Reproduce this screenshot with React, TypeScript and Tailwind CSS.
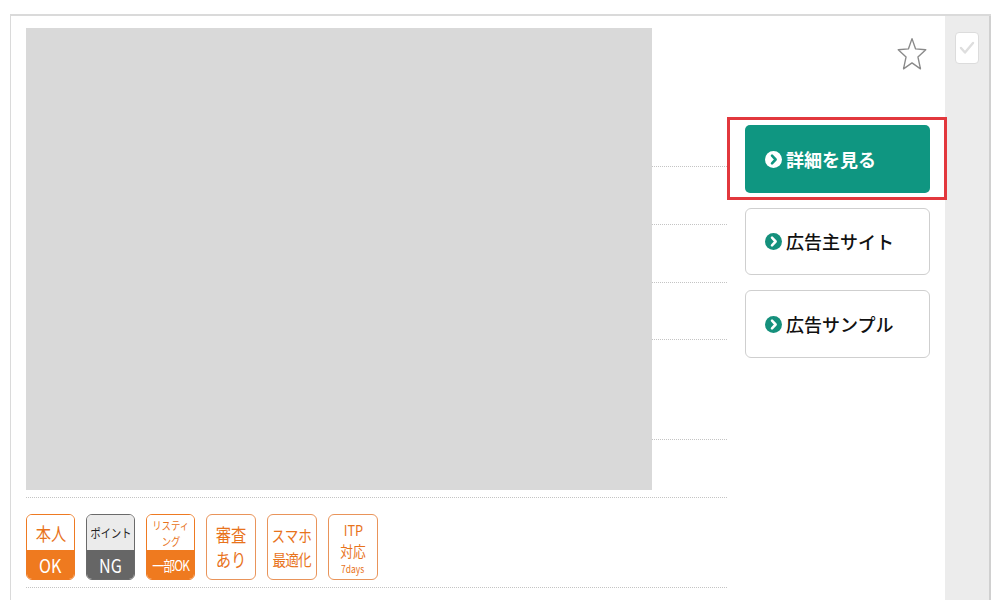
import React from "react";

const jp = { fontFamily: '"Noto Sans CJK JP", "Noto Sans", sans-serif' };

function Chevron({ inverted }: { inverted?: boolean }) {
  return (
    <svg width="17" height="17" viewBox="0 0 16 16" className="shrink-0">
      <circle cx="8" cy="8" r="8" fill={inverted ? "#ffffff" : "#15907c"} />
      <path
        d="M6.6 4.4 L10 8 L6.6 11.6"
        fill="none"
        stroke={inverted ? "#0f9681" : "#ffffff"}
        strokeWidth="2.4"
        strokeLinecap="round"
        strokeLinejoin="round"
      />
    </svg>
  );
}

function Star() {
  return (
    <svg width="32" height="36" viewBox="0 0 30 34">
      <path
        d="M15 2.5 L18.4 12.2 L28 13 L20.6 19.8 L23 31 L15 25.4 L7 31 L9.4 19.8 L2 13 L11.6 12.2 Z"
        fill="none"
        stroke="#8a8a8a"
        strokeWidth="1.3"
        strokeLinejoin="round"
      />
    </svg>
  );
}

function Narrow({ children, className }: { children: React.ReactNode; className?: string }) {
  return <span className={"block text-center scale-x-[0.85] whitespace-nowrap " + (className ?? "")}>{children}</span>;
}

function SplitBadge({
  top,
  bottom,
  dark,
  bottomClass,
}: {
  top: React.ReactNode;
  bottom: string;
  dark?: boolean;
  bottomClass: string;
}) {
  return (
    <div
      className={
        "w-[49px] h-[66px] rounded-[6px] border-[1.5px] overflow-hidden flex flex-col " +
        (dark ? "border-[#6a6a6a]" : "border-[#ee7a22]")
      }
    >
      <div
        className={
          "h-[35px] flex flex-col items-center justify-center " +
          (dark ? "bg-[#ebebeb] text-[#222]" : "bg-white text-[#e8731c]")
        }
      >
        {top}
      </div>
      <div
        className={
          "flex-1 flex items-center justify-center text-white " +
          (dark ? "bg-[#666666]" : "bg-[#ef7a1f]") +
          " " +
          bottomClass
        }
      >
        <Narrow>{bottom}</Narrow>
      </div>
    </div>
  );
}

function TextBadge({ children }: { children: React.ReactNode }) {
  return (
    <div className="w-[50px] h-[66px] rounded-[6px] border-[1.5px] border-[#e9945a] bg-white flex flex-col items-center justify-center text-[#e8731c]">
      {children}
    </div>
  );
}

export default function App() {
  const rows = [139, 58, 58, 57, 100, 58];
  return (
    <div className="w-[1000px] h-[600px] bg-white overflow-hidden relative" style={jp}>
      <div className="ml-[10px] mt-[14px] w-[981px] h-[600px] border-t-2 border-l border-[#dadada] flex">
        {/* main */}
        <div className="w-[934px] flex pl-[15px] pt-[12px]">
          {/* left table */}
          <div className="w-[701px] relative">
            {rows.map((h, i) => (
              <div key={i} style={{ height: h }} className="border-b border-dotted border-[#c4c4c4]" />
            ))}
            <div className="pt-[16px] h-[90px] border-b border-dotted border-[#c4c4c4] flex gap-[11px]">
              <SplitBadge
                top={<Narrow className="text-[18px] leading-[24px]">本人</Narrow>}
                bottom="OK"
                bottomClass="text-[19px] leading-[24px]"
              />
              <SplitBadge
                dark
                top={<Narrow className="text-[12px] leading-[17px]">ポイント</Narrow>}
                bottom="NG"
                bottomClass="text-[19px] leading-[24px]"
              />
              <SplitBadge
                top={
                  <>
                    <Narrow className="text-[11px] leading-[16px]">リスティ</Narrow>
                    <Narrow className="text-[11px] leading-[16px]">ング</Narrow>
                  </>
                }
                bottom="一部OK"
                bottomClass="text-[14px] leading-[20px] tracking-[-1px]"
              />
              <TextBadge>
                <Narrow className="text-[18px] leading-[25px]">審査</Narrow>
                <Narrow className="text-[18px] leading-[25px]">あり</Narrow>
              </TextBadge>
              <TextBadge>
                <Narrow className="text-[16px] leading-[24px]">スマホ</Narrow>
                <Narrow className="text-[16px] leading-[24px] tracking-[-1px]">最適化</Narrow>
              </TextBadge>
              <TextBadge>
                <Narrow className="text-[15px] leading-[21px]">ITP</Narrow>
                <Narrow className="text-[15px] leading-[21px]">対応</Narrow>
                <Narrow className="text-[10px] leading-[15px]">7days</Narrow>
              </TextBadge>
            </div>
            <div className="absolute left-0 top-0 w-[626px] h-[462px] bg-[#d9d9d9]" />
          </div>
          {/* right column */}
          <div className="w-[218px] relative">
            <div className="h-[97px] flex justify-end pr-[17px] pt-[8px]">
              <Star />
            </div>
            <div className="ml-[18px] w-[185px] flex flex-col gap-[15px]">
              <div className="h-[68px] rounded-[5px] bg-[#0f9681] flex items-center gap-[4px] pl-[20px] text-white font-bold text-[18px]">
                <Chevron inverted />
                <span>詳細を見る</span>
              </div>
              <div className="h-[67px] rounded-[6px] border border-[#cfcfcf] bg-white flex items-center gap-[4px] pl-[19px] text-[#111] font-medium text-[18px]">
                <Chevron />
                <span>広告主サイト</span>
              </div>
              <div className="h-[68px] rounded-[6px] border border-[#cfcfcf] bg-white flex items-center gap-[4px] pl-[19px] text-[#111] font-medium text-[18px]">
                <Chevron />
                <span>広告サンプル</span>
              </div>
            </div>
            {/* highlight annotation */}
            <div className="absolute left-0 top-[89px] w-[220px] h-[83px] border-[3px] border-[#e2383d] pointer-events-none" />
          </div>
        </div>
        {/* strip */}
        <div className="w-[46px] bg-[#ececec] border-r-2 border-[#d0d0d0] pt-[16px] pl-[10px]">
          <div className="w-[24px] h-[32px] rounded-[4px] border border-[#dcdcdc] bg-white flex items-center justify-center">
            <svg width="16" height="14" viewBox="0 0 16 14">
              <path d="M2 7 L6 11.5 L14 2" fill="none" stroke="#dedede" strokeWidth="2.4" strokeLinecap="round" strokeLinejoin="round" />
            </svg>
          </div>
        </div>
      </div>
    </div>
  );
}
